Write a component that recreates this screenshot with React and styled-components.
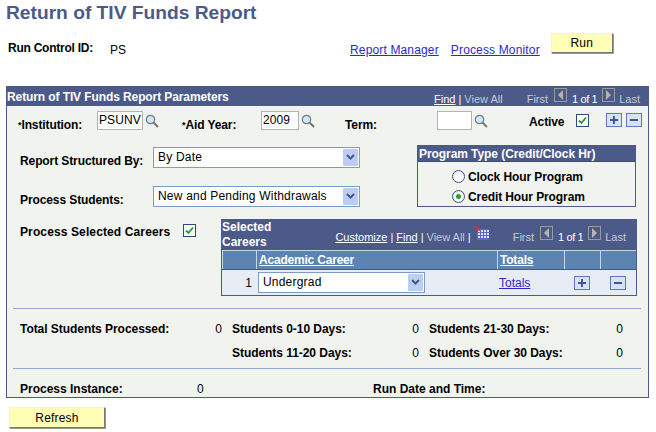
import React from 'react';
import styled, { createGlobalStyle } from 'styled-components';

const Global = createGlobalStyle`
  html, body { margin: 0; padding: 0; background: #fff; }
  body { font-family: "Liberation Sans", Arial, sans-serif; font-size: 12px; color: #000; }
`;

const Page = styled.div`
  width: 656px;
  height: 432px;
  overflow: hidden;
  padding: 0 7px 0 6px;
  box-sizing: border-box;
`;

const Title = styled.h1`
  margin: 0;
  height: 41px;
  font-size: 19.2px;
  line-height: 26px;
  font-weight: 700;
  color: #4c5a8a;
`;

const RunRow = styled.div`
  display: flex;
  align-items: flex-start;
  height: 45px;
  padding-left: 2px;
`;

const RunLabel = styled.span`
  width: 102px;
  font-weight: 700;
  line-height: 14px;
  letter-spacing: -0.25px;
`;

const RunValue = styled.span`
  width: 240px;
  margin-top: 2px;
  line-height: 14px;
`;

const Link = styled.a`
  color: #2a2acb;
  text-decoration: underline;
  line-height: 14px;
  white-space: nowrap;
`;

const RunLink = styled(Link)`
  margin: 2px 12px 0 0;
  letter-spacing: 0.15px;
`;

const PushButton = styled.button`
  box-sizing: border-box;
  font: 12px "Liberation Sans", Arial, sans-serif;
  letter-spacing: 0.2px;
  color: #000;
  background: #ffffb5;
  border: 1px solid;
  border-color: #f2f2d8 #777 #777 #f2f2d8;
  box-shadow: 1px 1px 0 #999;
  padding: 0;
`;

const RunButton = styled(PushButton)`
  width: 62px;
  height: 20px;
  margin: -8px 0 0 -1px;
`;

const Panel = styled.section`
  box-sizing: border-box;
  width: 643px;
  height: 312px;
  background: #f1f3ef;
  border: 1px solid #4c5a8a;
  border-top: 0;
`;

const PanelHead = styled.div`
  display: flex;
  align-items: flex-start;
  justify-content: space-between;
  box-sizing: border-box;
  height: 20px;
  margin: 0 -1px;
  padding: 2px 9px 0 1px;
  background: #4c5a8a;
  color: #fff;
`;

const HeadTitle = styled.b`
  margin-top: 1px;
  line-height: 16px;
  letter-spacing: -0.1px;
`;

const Nav = styled.div`
  display: flex;
  align-items: flex-end;
  height: 18px;
  color: #c5c9d8;
  font-size: 11px;
  line-height: 14px;
  white-space: nowrap;
`;

const CareersNav = styled(Nav)`
  margin-top: 7px;
`;

const NavLink = styled.span`
  color: #fff;
  text-decoration: underline;
`;

const NavSep = styled.span`
  margin: 0 3px;
  color: #fff;
`;

const NavGap = styled.span`
  width: ${p => p.$w}px;
`;

const NavCount = styled.span`
  color: #fff;
  margin: 0 5px;
  letter-spacing: -0.4px;
`;

const NavArrow = styled.span`
  display: flex;
  align-self: flex-start;
  align-items: center;
  justify-content: center;
  box-sizing: border-box;
  width: 13px;
  height: 14px;
  margin: ${p => (p.$next ? '0 4px 0 0' : '0 0 0 6px')};
  border: 1px solid #9a9a9a;
`;

const GridIconBox = styled.svg`
  align-self: flex-start;
  width: 14px;
  height: 14px;
  margin-left: 1px;
`;

const ParamRow = styled.div`
  display: flex;
  align-items: flex-start;
  box-sizing: border-box;
  height: 30px;
  padding: 5px 0 0 11px;
`;

const Label = styled.label`
  font-weight: 700;
  white-space: nowrap;
  line-height: 14px;
  letter-spacing: -0.1px;
  width: ${p => p.$w}px;
  flex: none;
`;

const RowLabel = styled(Label)`
  margin-top: ${p => p.$top ?? 7}px;
`;

const Req = styled.span`
  font-size: 9px;
  vertical-align: 1px;
`;

const TextInput = styled.div`
  box-sizing: border-box;
  width: ${p => p.$w}px;
  height: 19px;
  padding: 1px;
  background: #fff;
  border: 1px solid #b4b4b4;
  line-height: 15px;
  letter-spacing: 0.1px;
  overflow: hidden;
  flex: none;
`;

const LookupIcon = styled.svg`
  width: 14px;
  height: 14px;
  margin: 3px 0 0 2px;
  flex: none;
`;

const Spacer = styled.span`
  width: ${p => p.$w}px;
  flex: none;
`;

const CheckBox = styled.span`
  display: flex;
  align-items: center;
  justify-content: center;
  box-sizing: border-box;
  width: 13px;
  height: 13px;
  margin-top: ${p => p.$top || 0}px;
  background: #fff;
  border: 1px solid #2c4a7c;
  flex: none;
`;

const IconBtn = styled.span`
  display: flex;
  align-items: center;
  justify-content: center;
  box-sizing: border-box;
  width: 16px;
  height: 14px;
  margin-top: ${p => p.$top || 0}px;
  background: #d7e2f7;
  border: 1px solid #5f78be;
  flex: none;
`;

const MiddleRow = styled.div`
  display: flex;
  justify-content: space-between;
  margin-top: 9px;
  padding: 0 12px 0 13px;
`;

const FieldColumn = styled.div`
  display: flex;
  flex-direction: column;
  gap: 18px;
  padding-top: 2px;
`;

const FieldRow = styled.div`
  display: flex;
  align-items: center;
`;

const FieldLabel = styled(Label)`
  margin-top: 7px;
`;

const Select = styled.div`
  display: flex;
  align-items: center;
  justify-content: space-between;
  box-sizing: border-box;
  width: ${p => p.$w}px;
  height: 21px;
  padding: 0 1px 0 4px;
  background: #fff;
  border: 1px solid #7a9cc6;
  line-height: 17px;
  letter-spacing: 0.2px;
  white-space: nowrap;
`;

const SelectArrow = styled.span`
  display: flex;
  align-items: center;
  justify-content: center;
  width: 15px;
  height: 17px;
  background: #bccdf4;
  border-radius: 1px;
`;

const TypeBox = styled.div`
  box-sizing: border-box;
  width: 219px;
  height: 62px;
  border: 1px solid #4c5a8a;
`;

const TypeHead = styled.div`
  box-sizing: border-box;
  height: 16px;
  padding-left: 1px;
  background: #4c5a8a;
  color: #fff;
  font-weight: 700;
  line-height: 16px;
  letter-spacing: -0.07px;
  border-bottom: 1px solid #3c4a7a;
`;

const RadioList = styled.div`
  display: flex;
  flex-direction: column;
  gap: 7px;
  padding: 8px 0 0 34px;
`;

const RadioRow = styled.div`
  display: flex;
  align-items: center;
  gap: 3px;
  height: 13px;
  font-weight: 700;
  letter-spacing: -0.1px;
`;

const Radio = styled.span`
  display: flex;
  align-items: center;
  justify-content: center;
  box-sizing: border-box;
  width: 13px;
  height: 13px;
  border-radius: 50%;
  background: radial-gradient(circle at 65% 65%, #fff 30%, #d9dde2 100%);
  border: 1px solid #3c5684;
  &::after {
    content: '';
    width: 5px;
    height: 5px;
    border-radius: 50%;
    background: ${p => (p.$on ? '#25a52e' : 'transparent')};
  }
`;

const CareersRow = styled.div`
  display: flex;
  align-items: flex-start;
  margin-top: 12px;
  padding-left: 13px;
`;

const CareersLabel = styled(Label)`
  margin-top: 6px;
  letter-spacing: 0.12px;
`;

const Careers = styled.div`
  box-sizing: border-box;
  width: 416px;
  height: 77px;
  margin-left: 25px;
  border: 1px solid #4c5a8a;
  border-top: 0;
  background: #e7ecf5;
`;

const CareersHead = styled.div`
  display: flex;
  align-items: flex-start;
  justify-content: space-between;
  box-sizing: border-box;
  height: 31px;
  margin: 0 -1px;
  padding: 0 11px 0 1px;
  background: #4c5a8a;
  color: #fff;
`;

const CareersTitle = styled.b`
  width: 60px;
  margin-top: 1px;
  line-height: 15px;
`;

const CareersColumns = styled.div`
  display: grid;
  grid-template-columns: 34px 241px 67px 36px 1fr;
  height: 20px;
  border-bottom: 1px solid #3f5a86;
  box-sizing: border-box;
`;

const ColumnHead = styled.div`
  box-sizing: border-box;
  padding-left: 2px;
  background: #5b84b2;
  border-top: 1px solid #c9d6e6;
  border-left: 1px solid #c9d6e6;
  color: #fff;
  font-weight: 700;
  text-decoration: underline;
  line-height: 18px;
  letter-spacing: -0.2px;
`;

const CareersCells = styled.div`
  display: grid;
  grid-template-columns: 34px 241px 67px 36px 1fr;
  align-items: center;
  height: 25px;
`;

const RowNum = styled.span`
  text-align: right;
  padding-right: 4px;
`;

const Cell = styled.div`
  display: flex;
  align-items: center;
  justify-content: ${p => (p.$center ? 'center' : 'flex-start')};
  padding-left: ${p => p.$pad || 0}px;
`;

const Divider = styled.hr`
  height: 1px;
  margin: ${p => p.$top}px 7px 0 6px;
  border: 0;
  background: #95a9d3;
`;

const Stats = styled.div`
  display: grid;
  grid-template-columns: 178px 14px 163px 14px 170px 14px;
  column-gap: 10px;
  grid-auto-rows: 24px;
  align-items: center;
  margin-top: 8px;
  padding-left: 13px;
`;

const StatLabel = styled.b`
  white-space: nowrap;
  letter-spacing: -0.05px;
  grid-column: ${p => p.$col || 'auto'};
`;

const StatValue = styled.span`
  text-align: right;
`;

const FootRow = styled.div`
  display: grid;
  grid-template-columns: 177px 176px auto;
  align-items: center;
  height: 14px;
  margin-top: 13px;
  padding-left: 13px;
`;

const RefreshButton = styled(PushButton)`
  display: block;
  width: 96px;
  height: 21px;
  margin: 9px 0 0 3px;
`;

const Lookup = () => (
  <LookupIcon viewBox="0 0 14 14">
    <circle cx="5.5" cy="5.5" r="4.2" fill="#d3e6f6" stroke="#6d7f88" strokeWidth="1.2" />
    <path d="M8.5 8.5l4.5 4.5" stroke="#77756a" strokeWidth="2" />
  </LookupIcon>
);

const Check = () => (
  <svg width="9" height="9" viewBox="0 0 9 9">
    <path d="M1 4.5l2.5 2.5L8 1.5" fill="none" stroke="#1f9a2c" strokeWidth="1.8" />
  </svg>
);

const Plus = () => (
  <svg width="10" height="10" viewBox="0 0 10 10">
    <path d="M5 1v8M1 5h8" stroke="#3f5796" strokeWidth="2" />
  </svg>
);

const Minus = () => (
  <svg width="10" height="10" viewBox="0 0 10 10">
    <path d="M1 5h8" stroke="#3f5796" strokeWidth="2" />
  </svg>
);

const Chevron = () => (
  <svg width="9" height="7" viewBox="0 0 9 7">
    <path d="M1 1l3.5 3.5L8 1" fill="none" stroke="#45587f" strokeWidth="2" />
  </svg>
);

const Tri = ({ right }) => (
  <svg width="7" height="10" viewBox="0 0 7 10">
    <path d={right ? 'M1 0v10l5-5z' : 'M6 0v10L1 5z'} fill="#b4b4b4" />
  </svg>
);

const GridIcon = () => (
  <GridIconBox viewBox="0 0 14 14">
    <rect x="2" y="3" width="12" height="11" fill="#5c64d6" />
    <path d="M3 4h2v2H3zM6 4h2v2H6zM9 4h2v2H9zM12 4h2v2h-2zM3 7h2v2H3zM6 7h2v2H6zM9 7h2v2H9zM12 7h2v2h-2zM3 10h2v2H3zM6 10h2v2H6zM9 10h2v2H9zM12 10h2v2h-2z" fill="#e0e2fa" />
    <path d="M0 0l3.5 3" stroke="#e0302a" strokeWidth="2" />
    <path d="M5.5 5L1.5 4.5 4.5 1.5z" fill="#e0302a" />
  </GridIconBox>
);

const Pager = () => (
  <>
    First
    <NavArrow><Tri /></NavArrow>
    <NavCount>1 of 1</NavCount>
    <NavArrow $next><Tri right /></NavArrow>
    Last
  </>
);

const SelectBox = ({ w, children }) => (
  <Select $w={w}>
    {children}
    <SelectArrow><Chevron /></SelectArrow>
  </Select>
);

export default function App() {
  return (
    <Page>
      <Global />
      <Title>Return of TIV Funds Report</Title>
      <RunRow>
        <RunLabel>Run Control ID:</RunLabel>
        <RunValue>PS</RunValue>
        <RunLink href="#">Report Manager</RunLink>
        <RunLink href="#">Process Monitor</RunLink>
        <RunButton>Run</RunButton>
      </RunRow>
      <Panel>
        <PanelHead>
          <HeadTitle>Return of TIV Funds Report Parameters</HeadTitle>
          <Nav>
            <NavLink>Find</NavLink>
            <NavSep>|</NavSep>
            View All
            <NavGap $w={24} />
            <Pager />
          </Nav>
        </PanelHead>
        <ParamRow>
          <RowLabel $w={79}><Req>*</Req>Institution:</RowLabel>
          <TextInput $w={46}>PSUNV</TextInput>
          <Lookup />
          <Spacer $w={23} />
          <RowLabel $w={79}><Req>*</Req>Aid Year:</RowLabel>
          <TextInput $w={38}>2009</TextInput>
          <Lookup />
          <Spacer $w={30} />
          <RowLabel $w={92}>Term:</RowLabel>
          <TextInput $w={35} />
          <Lookup />
          <Spacer $w={41} />
          <RowLabel $w={47} $top={4}>Active</RowLabel>
          <CheckBox $top={3}><Check /></CheckBox>
          <Spacer $w={17} />
          <IconBtn $top={2}><Plus /></IconBtn>
          <Spacer $w={4} />
          <IconBtn $top={2}><Minus /></IconBtn>
        </ParamRow>
        <MiddleRow>
          <FieldColumn>
            <FieldRow>
              <FieldLabel $w={133}>Report Structured By:</FieldLabel>
              <SelectBox w={207}>By Date</SelectBox>
            </FieldRow>
            <FieldRow>
              <FieldLabel $w={133}>Process Students:</FieldLabel>
              <SelectBox w={207}>New and Pending Withdrawals</SelectBox>
            </FieldRow>
          </FieldColumn>
          <TypeBox>
            <TypeHead>Program Type (Credit/Clock Hr)</TypeHead>
            <RadioList>
              <RadioRow><Radio />Clock Hour Program</RadioRow>
              <RadioRow><Radio $on />Credit Hour Program</RadioRow>
            </RadioList>
          </TypeBox>
        </MiddleRow>
        <CareersRow>
          <CareersLabel $w={163}>Process Selected Careers</CareersLabel>
          <CheckBox $top={5}><Check /></CheckBox>
          <Careers>
            <CareersHead>
              <CareersTitle>Selected Careers</CareersTitle>
              <CareersNav>
                <NavLink>Customize</NavLink>
                <NavSep>|</NavSep>
                <NavLink>Find</NavLink>
                <NavSep>|</NavSep>
                View All
                <NavSep>|</NavSep>
                <GridIcon />
                <NavGap $w={24} />
                <Pager />
              </CareersNav>
            </CareersHead>
            <CareersColumns>
              <ColumnHead />
              <ColumnHead>Academic Career</ColumnHead>
              <ColumnHead>Totals</ColumnHead>
              <ColumnHead />
              <ColumnHead />
            </CareersColumns>
            <CareersCells>
              <RowNum>1</RowNum>
              <Cell $pad={2}><SelectBox w={167}>Undergrad</SelectBox></Cell>
              <Cell $pad={2}><Link href="#">Totals</Link></Cell>
              <Cell $center><IconBtn><Plus /></IconBtn></Cell>
              <Cell $center><IconBtn><Minus /></IconBtn></Cell>
            </CareersCells>
          </Careers>
        </CareersRow>
        <Divider $top={12} />
        <Stats>
          <StatLabel>Total Students Processed:</StatLabel>
          <StatValue>0</StatValue>
          <StatLabel>Students 0-10 Days:</StatLabel>
          <StatValue>0</StatValue>
          <StatLabel>Students 21-30 Days:</StatLabel>
          <StatValue>0</StatValue>
          <StatLabel $col={3}>Students 11-20 Days:</StatLabel>
          <StatValue>0</StatValue>
          <StatLabel>Students Over 30 Days:</StatLabel>
          <StatValue>0</StatValue>
        </Stats>
        <Divider $top={3} />
        <FootRow>
          <b>Process Instance:</b>
          <span>0</span>
          <b>Run Date and Time:</b>
        </FootRow>
      </Panel>
      <RefreshButton>Refresh</RefreshButton>
    </Page>
  );
}
